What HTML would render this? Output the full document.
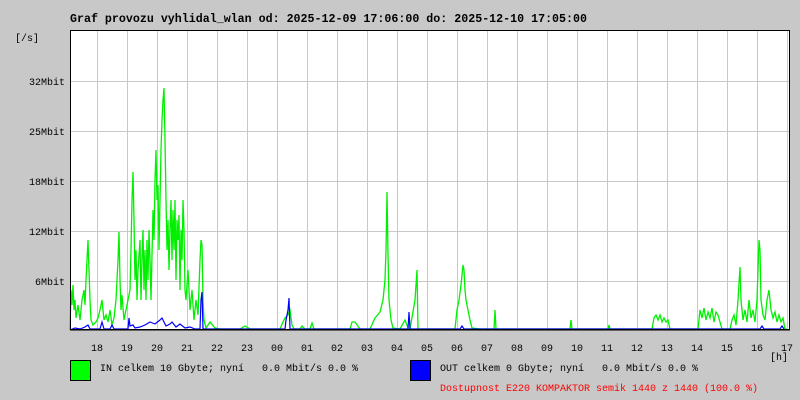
<!DOCTYPE html>
<html><head><meta charset="utf-8"><style>
html,body{margin:0;padding:0;background:#c8c8c8;}
svg{display:block}
text{font-family:"Liberation Mono","DejaVu Sans Mono",monospace;white-space:pre;}
</style></head><body>
<svg width="800" height="400" viewBox="0 0 800 400" xmlns="http://www.w3.org/2000/svg" xml:space="preserve">
<rect width="800" height="400" fill="#c8c8c8"/>
<text x="70" y="22" font-size="11.6" font-weight="bold" fill="#000" textLength="517" lengthAdjust="spacingAndGlyphs">Graf provozu vyhlidal_wlan od: 2025-12-09 17:06:00 do: 2025-12-10 17:05:00</text>
<rect x="70" y="30" width="720" height="300" fill="#fff"/>
<g stroke="#c8c8c8" stroke-width="1">
<line x1="70" y1="81.5" x2="790" y2="81.5"/><line x1="70" y1="131.5" x2="790" y2="131.5"/><line x1="70" y1="181.5" x2="790" y2="181.5"/><line x1="70" y1="231.5" x2="790" y2="231.5"/><line x1="70" y1="281.5" x2="790" y2="281.5"/>
<line x1="97.5" y1="30" x2="97.5" y2="330"/><line x1="127.5" y1="30" x2="127.5" y2="330"/><line x1="157.5" y1="30" x2="157.5" y2="330"/><line x1="187.5" y1="30" x2="187.5" y2="330"/><line x1="217.5" y1="30" x2="217.5" y2="330"/><line x1="247.5" y1="30" x2="247.5" y2="330"/><line x1="277.5" y1="30" x2="277.5" y2="330"/><line x1="307.5" y1="30" x2="307.5" y2="330"/><line x1="337.5" y1="30" x2="337.5" y2="330"/><line x1="367.5" y1="30" x2="367.5" y2="330"/><line x1="397.5" y1="30" x2="397.5" y2="330"/><line x1="427.5" y1="30" x2="427.5" y2="330"/><line x1="457.5" y1="30" x2="457.5" y2="330"/><line x1="487.5" y1="30" x2="487.5" y2="330"/><line x1="517.5" y1="30" x2="517.5" y2="330"/><line x1="547.5" y1="30" x2="547.5" y2="330"/><line x1="577.5" y1="30" x2="577.5" y2="330"/><line x1="607.5" y1="30" x2="607.5" y2="330"/><line x1="637.5" y1="30" x2="637.5" y2="330"/><line x1="667.5" y1="30" x2="667.5" y2="330"/><line x1="697.5" y1="30" x2="697.5" y2="330"/><line x1="727.5" y1="30" x2="727.5" y2="330"/><line x1="757.5" y1="30" x2="757.5" y2="330"/><line x1="787.5" y1="30" x2="787.5" y2="330"/>
</g>
<polyline fill="none" stroke="#00f000" stroke-width="1.3" points="70,330 71,290 72,305 73,285 74,310 75,300 76,318 78,305 80,320 82,300 84,290 85,305 86,280 87,260 88,240 89,270 90,300 91,320 93,325 96,322 98,318 100,310 102,300 104,320 106,315 108,322 110,310 112,325 114,318 116,300 118,260 119,232 120,280 121,310 122,295 124,320 126,310 128,300 130,290 131,250 132,200 133,172 134,220 135,280 136,250 137,300 138,270 140,240 141,300 142,260 143,230 144,290 145,250 146,300 147,240 148,280 149,230 150,260 151,300 152,255 153,210 154,240 155,180 156,150 157,200 158,185 159,250 160,200 161,150 162,120 163,100 164,88 165,140 166,200 167,250 168,220 169,270 170,230 171,200 172,260 173,210 174,250 175,200 176,280 177,220 178,240 179,215 180,290 181,230 182,260 183,200 184,230 185,290 186,300 188,270 190,310 192,290 194,320 196,300 198,315 200,260 201,240 202,245 203,300 204,320 206,328 210,322 215,328 220,329 240,329 245,326 250,329 280,329 283,322 285,318 288,315 290,310 292,325 294,329 300,329 302,326 305,329 310,329 312,323 314,329 350,329 352,322 355,322 360,329 370,329 375,318 380,312 383,300 385,280 386,250 387,192 388,255 389,300 391,320 393,328 400,329 405,320 408,328 410,329 415,300 417,270 418,329 455,329 457,310 459,300 461,285 462,275 463,265 464,270 465,290 466,300 468,310 470,320 472,328 480,329 494,329 495,310 496,329 520,329 570,329 571,320 572,329 608,329 609,325 610,329 652,329 654,318 656,315 658,320 660,315 662,322 664,318 666,322 668,320 670,329 698,329 700,310 702,318 704,308 706,320 708,312 710,318 712,308 714,322 716,312 718,315 720,322 722,329 730,329 732,320 734,315 736,325 738,300 740,267 741,300 743,320 745,310 747,322 749,300 751,318 753,310 755,322 757,300 759,240 760,250 761,300 763,315 765,320 767,300 769,290 771,310 773,318 775,312 777,322 779,315 781,322 783,318 785,329 787,329"/>
<polyline fill="none" stroke="#0000ff" stroke-width="1.2" points="70,330 75,328 80,329 85,327 88,325 90,329 100,329 102,322 104,329 110,329 112,325 114,329 128,329 129,318 130,326 133,325 135,328 140,327 145,325 150,322 155,324 160,320 162,318 164,322 166,326 170,324 172,322 176,327 180,324 185,328 190,327 195,329 200,329 201,300 202,292 203,329 210,329 285,329 286,320 288,310 289,298 290,329 300,329 408,329 409,312 410,329 415,329 460,329 462,326 464,329 760,329 762,326 764,329 780,329 782,326 784,329"/>
<rect x="70.5" y="30.5" width="719" height="299" fill="none" stroke="#000" stroke-width="1"/>
<line x1="70" y1="330" x2="790" y2="330" stroke="#000" stroke-width="1"/>
<g font-size="10" fill="#000">
<text x="15" y="41">[/s]</text>
<text x="65" y="85" text-anchor="end">32Mbit</text>
<text x="65" y="135" text-anchor="end">25Mbit</text>
<text x="65" y="185" text-anchor="end">18Mbit</text>
<text x="65" y="235" text-anchor="end">12Mbit</text>
<text x="65" y="285" text-anchor="end">6Mbit</text>
<g text-anchor="middle">
<text x="97" y="351">18</text><text x="127" y="351">19</text><text x="157" y="351">20</text><text x="187" y="351">21</text><text x="217" y="351">22</text><text x="247" y="351">23</text><text x="277" y="351">00</text><text x="307" y="351">01</text><text x="337" y="351">02</text><text x="367" y="351">03</text><text x="397" y="351">04</text><text x="427" y="351">05</text><text x="457" y="351">06</text><text x="487" y="351">07</text><text x="517" y="351">08</text><text x="547" y="351">09</text><text x="577" y="351">10</text><text x="607" y="351">11</text><text x="637" y="351">12</text><text x="667" y="351">13</text><text x="697" y="351">14</text><text x="727" y="351">15</text><text x="757" y="351">16</text><text x="787" y="351">17</text>
</g>
<text x="770" y="360">[h]</text>
<text x="100" y="371">IN celkem 10 Gbyte; nyní   0.0 Mbit/s 0.0 %</text>
<text x="440" y="371">OUT celkem 0 Gbyte; nyní   0.0 Mbit/s 0.0 %</text>
<text x="440" y="391" fill="#ff0000">Dostupnost E220 KOMPAKTOR semik 1440 z 1440 (100.0 %)</text>
</g>
<rect x="70.5" y="360.5" width="20" height="20" fill="#00ff00" stroke="#000"/>
<rect x="410.5" y="360.5" width="20" height="20" fill="#0000ff" stroke="#000"/>
</svg>
</body></html>
